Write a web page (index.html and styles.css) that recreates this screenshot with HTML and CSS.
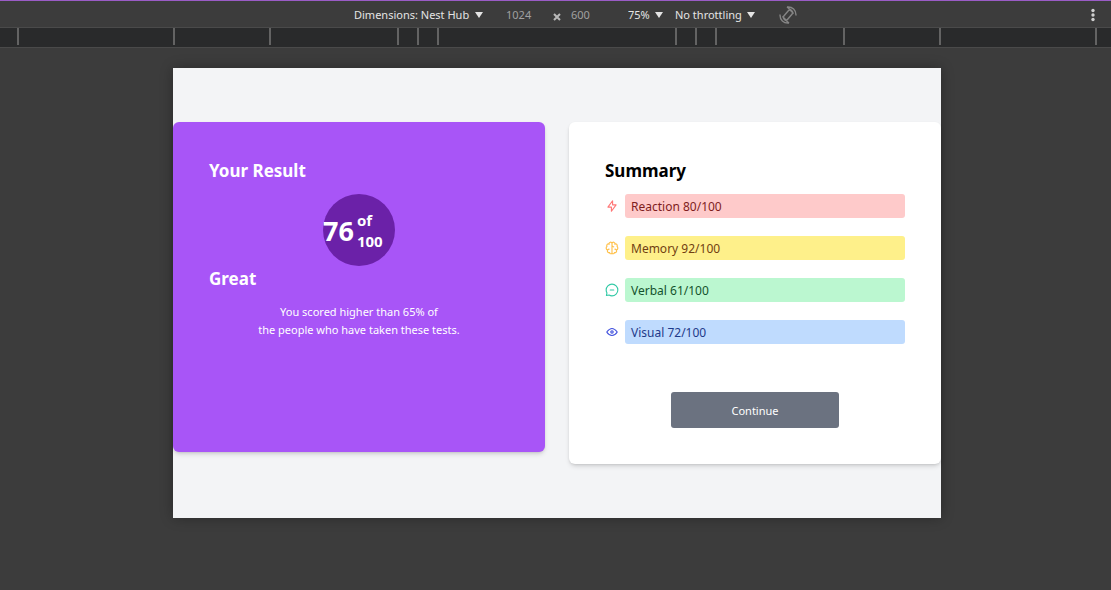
FILE: index.html
```html
<!DOCTYPE html>
<html lang="en">
<head>
<meta charset="utf-8">
<meta name="viewport" content="width=device-width, initial-scale=1">
<title>Results summary</title>
<link rel="stylesheet" href="styles.css">
</head>
<body>
<header class="toolbar">
  <div class="tools">
    <label class="picker device">
      <select aria-label="Device"><option>Dimensions: Nest Hub</option></select>
      <svg class="caret" viewBox="0 0 8 6" aria-hidden="true"><path d="M0 0h8L4 6z"/></svg>
    </label>
    <input class="size" type="text" value="1024" aria-label="Width">
    <svg class="times" viewBox="0 0 8 8" aria-hidden="true"><path d="M1 1l6 6M7 1L1 7"/></svg>
    <input class="size" type="text" value="600" aria-label="Height">
    <label class="picker zoom">
      <select aria-label="Zoom"><option>75%</option></select>
      <svg class="caret" viewBox="0 0 8 6" aria-hidden="true"><path d="M0 0h8L4 6z"/></svg>
    </label>
    <label class="picker throttling">
      <select aria-label="Throttling"><option>No throttling</option></select>
      <svg class="caret" viewBox="0 0 8 6" aria-hidden="true"><path d="M0 0h8L4 6z"/></svg>
    </label>
    <button class="icon-button" type="button" aria-label="Rotate">
      <svg class="rotate" viewBox="0 0 18 18" aria-hidden="true">
        <rect x="6.500" y="4" width="5" height="10" rx="1.500" transform="rotate(40 9 9)"/>
        <path d="M8 1C13.500 .5 17.200 4 17 9.500M11 3.500C13 4.500 14 6 14 8M10 17C4.500 17.500 .8 14 1 8.500M7 14.500C5 13.500 4 12 4 10M8 1l3 2.500M10 17L7 14.500"/>
      </svg>
    </button>
  </div>
  <button class="icon-button more" type="button" aria-label="More options">
    <svg class="dots" viewBox="0 0 4 14" aria-hidden="true"><circle cx="2" cy="2.500" r="1.700"/><circle cx="2" cy="7" r="1.700"/><circle cx="2" cy="11.500" r="1.700"/></svg>
  </button>
</header>
<div class="ruler" aria-hidden="true">
  <i class="w-laptop"></i><i class="w-tablet"></i><i class="w-large"></i><i class="w-phone"></i><i class="w-phone"></i>
  <i class="w-small"></i>
  <i class="w-phone"></i><i class="w-phone"></i><i class="w-large"></i><i class="w-tablet"></i><i class="w-laptop last"></i>
</div>
<div class="stage">
  <main class="screen">
    <section class="card result">
      <h2>Your Result</h2>
      <div class="score"><span class="value">76</span><span class="total">of<br>100</span></div>
      <h2>Great</h2>
      <p>You scored higher than 65% of<br>the people who have taken these tests.</p>
    </section>
    <section class="card summary">
      <h2>Summary</h2>
      <ul class="scores">
        <li class="reaction">
          <svg viewBox="0 0 20 20" aria-hidden="true"><path d="M10.833 8.333V2.500l-6.666 9.167h5V17.500l6.666-9.167h-5Z"/></svg>
          <span>Reaction 80/100</span>
        </li>
        <li class="memory">
          <svg viewBox="0 0 20 20" aria-hidden="true"><path d="M5.833 11.667a2.500 2.500 0 1 0 .834 4.858M3.553 13.004a3.333 3.333 0 0 1-.728-5.530m.025-.067a2.083 2.083 0 0 1 2.983-2.824m.199.054A2.083 2.083 0 1 1 10 3.750v12.917a1.667 1.667 0 0 1-3.333 0M10 5.833a2.500 2.500 0 0 0 2.500 2.500m1.667 3.334a2.500 2.500 0 1 1-.834 4.858m3.114-3.521a3.333 3.333 0 0 0 .728-5.530m-.025-.067a2.083 2.083 0 0 0-2.983-2.824m-.199.054A2.083 2.083 0 1 0 10 3.750v12.917a1.667 1.667 0 0 0 3.333 0"/></svg>
          <span>Memory 92/100</span>
        </li>
        <li class="verbal">
          <svg viewBox="0 0 20 20" aria-hidden="true"><path d="M7.500 10h5M10 18.333A8.333 8.333 0 1 0 1.667 10c0 1.518.406 2.942 1.115 4.167l-.699 3.750 3.750-.699A8.300 8.300 0 0 0 10 18.333Z"/></svg>
          <span>Verbal 61/100</span>
        </li>
        <li class="visual">
          <svg viewBox="0 0 20 20" aria-hidden="true"><path d="M10 11.667a1.667 1.667 0 1 0 0-3.334 1.667 1.667 0 0 0 0 3.334ZM17.500 10c-1.574 2.492-4.402 5-7.500 5s-5.926-2.508-7.500-5C4.416 7.632 6.660 5 10 5s5.584 2.632 7.500 5Z"/></svg>
          <span>Visual 72/100</span>
        </li>
      </ul>
      <button class="continue" type="button">Continue</button>
    </section>
  </main>
</div>
</body>
</html>
```

FILE: styles.css
```css
* { box-sizing: border-box; }

body {
  display: flex;
  flex-direction: column;
  min-height: 100vh;
  margin: 0;
  background: #3c3c3c;
  font: 11px/18px "Segoe UI", "Noto Sans", "Open Sans", sans-serif;
}

button, input, select {
  margin: 0;
  padding: 0;
  border: 0;
  background: none;
  color: inherit;
  font: inherit;
}

h2, p, ul { margin: 0; padding: 0; }

/* Device toolbar */
.toolbar {
  display: grid;
  grid-template-columns: 1fr auto 1fr;
  align-items: center;
  height: 28px;
  padding: 1px 16px 0 56px;
  border-top: 1px solid #9a5cc6;
  border-bottom: 1px solid #4a4a4a;
  color: #e4e4e4;
}

.tools { display: flex; align-items: center; grid-column: 2; }
.picker { display: flex; align-items: center; gap: 5px; }
.picker select { appearance: none; }
.caret { width: 8px; height: 6px; fill: #e4e4e4; }
.device { margin-right: 23px; }
.size { width: 47px; color: #a0a0a0; }
.times { width: 8px; height: 8px; margin: 4px 10px 0 0; fill: none; stroke: #b8b8b8; stroke-width: 2; }
.zoom { margin-left: 10px; }
.throttling { margin: 0 24px 0 12px; }
.icon-button { display: flex; }
.rotate { width: 18px; height: 18px; fill: none; stroke: #858585; stroke-width: 1.4; }
.more { justify-self: end; }
.dots { width: 4px; height: 14px; fill: #d0d0d0; }

/* Breakpoint ruler */
.ruler {
  display: flex;
  justify-content: center;
  height: 20px;
  padding: 0 0 2px 2px;
  border-bottom: 1px solid #4a4a4a;
  background: #292a2b;
}

.ruler i { flex: none; border-left: 2px solid #636363; }
.w-laptop { width: 156px; }
.w-tablet { width: 96px; }
.w-large { width: 128px; }
.w-phone { width: 20px; }
.w-small { width: 238px; }
.ruler .last { width: 158px; border-right: 2px solid #636363; }

/* Emulated screen */
.stage { padding: 20px 170px 0 173px; }

.screen {
  display: grid;
  grid-template-columns: 1fr 1fr;
  align-items: start;
  gap: 24px;
  padding: 54px 0;
  background: #f3f4f6;
  box-shadow: 0 0 12px rgba(0, 0, 0, .3);
}

.card {
  padding: 36px;
  border-radius: 6px;
  box-shadow: 0 3px 5px -1px rgba(0, 0, 0, .15), 0 1px 3px -1px rgba(0, 0, 0, .15);
}

.card h2 { font-size: 17px; line-height: 26px; }

.result { min-height: 330px; background: #a855f7; color: #fff; }
.result p { margin-top: 11px; text-align: center; }

.score {
  display: flex;
  align-items: center;
  gap: 3px;
  width: 72px;
  height: 72px;
  margin: 10px auto 0;
  padding-top: 2px;
  border-radius: 50%;
  background: #6b21a8;
  font-weight: 700;
}

.value { font-size: 27px; line-height: 30px; }
.total { font-size: 15px; line-height: 21px; }

.summary { background: #fff; }

.scores {
  display: grid;
  gap: 18px;
  margin-top: 10px;
  list-style: none;
  font-size: 12px;
}

.scores li { display: flex; align-items: center; gap: 6px; }
.scores svg { width: 14px; height: 14px; fill: none; stroke-width: 1.6; stroke-linejoin: round; stroke-linecap: round; opacity: .8; }
.scores span { flex: 1; padding: 4px 6px 2px; border-radius: 3px; }

.reaction svg { stroke: #f55; }
.reaction span { background: #fecaca; color: #7f1d1d; }
.memory svg { stroke: #ffb21e; }
.memory span { background: #fef08a; color: #713f12; }
.verbal svg { stroke: #00bd91; }
.verbal span { background: #bbf7d0; color: #14532d; }
.visual svg { stroke: #1125d6; }
.visual span { background: #bfdbfe; color: #1e3a8a; }

.continue {
  display: block;
  width: 56%;
  margin: 48px auto 0;
  padding: 10px 9px 8px;
  border-radius: 3px;
  background: #6b7280;
  color: #fff;
}
```
